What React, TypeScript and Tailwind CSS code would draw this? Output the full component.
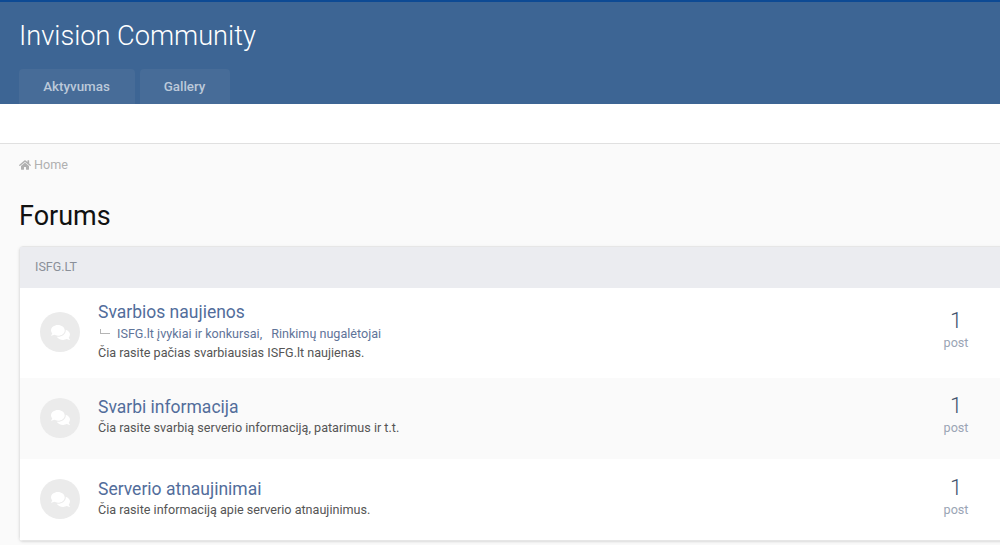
import React from 'react';
import { FaComments, FaHome } from 'react-icons/fa';

interface Forum {
  title: string;
  subs?: string[];
  desc: string;
  rowClass: string;
}

const forums: Forum[] = [
  {
    title: 'Svarbios naujienos',
    subs: ['ISFG.lt įvykiai ir konkursai,', 'Rinkimų nugalėtojai'],
    desc: 'Čia rasite pačias svarbiausias ISFG.lt naujienas.',
    rowClass: 'h-[90px] bg-white',
  },
  {
    title: 'Svarbi informacija',
    desc: 'Čia rasite svarbią serverio informaciją, patarimus ir t.t.',
    rowClass: 'h-[81px] bg-[#fafafa]',
  },
  {
    title: 'Serverio atnaujinimai',
    desc: 'Čia rasite informaciją apie serverio atnaujinimus.',
    rowClass: 'h-[81px] pt-[1px] bg-white',
  },
];

const ForumRow = ({ forum }: { forum: Forum }) => (
  <div className={`flex items-center pl-5 pr-[23px] ${forum.rowClass}`}>
    <div className="w-10 h-10 rounded-full bg-[#ebebeb] flex items-center justify-center shrink-0 mb-[2px]">
      <FaComments className="w-[19px] h-[19px] text-white" />
    </div>
    <div className="ml-[18px] flex-1 mb-[4px]">
      <h4 className="text-[17.5px] leading-[22px] text-[#526d9b]">{forum.title}</h4>
      {forum.subs && (
        <div className="flex items-center text-[12.6px] leading-[18px] text-[#5f7499] mt-[2px]">
          <span className="w-[10px] h-[5px] ml-[2px] mr-[7px] mb-[4px] border-l border-b border-[#b5b5b5]" />
          <span>{forum.subs[0]}</span>
          <span className="ml-[9px]">{forum.subs[1]}</span>
        </div>
      )}
      <p className="text-[12.6px] leading-[18px] text-[#555555] mt-[1px]">{forum.desc}</p>
    </div>
    <div className="w-[80px] text-center shrink-0 mb-[8px]">
      <div className="text-[22px] leading-[26px] font-light text-[#44546f]">1</div>
      <div className="text-[12.6px] leading-[17px] text-[#9aa5b5]">post</div>
    </div>
  </div>
);

const App = () => {
  return (
    <div className="w-[1000px] h-[545px] overflow-hidden bg-[#fafafa] font-['Roboto',sans-serif]">
      <header className="h-[104px] bg-[#3d6594] border-t-2 border-[#0d4a94] flex flex-col justify-between">
        <h1 className="pl-[19px] pt-[15px] text-[27.2px] leading-[38px] font-light text-white">Invision Community</h1>
        <nav className="flex gap-[5px] pl-[19px]">
          <a className="h-[35px] w-[116px] pt-[1px] pr-[1px] flex items-center justify-center rounded-t-sm bg-[#476c98] text-[13.4px] font-medium text-[#bcc9da]">
            Aktyvumas
          </a>
          <a className="h-[35px] w-[90px] pt-[1px] pr-[1px] flex items-center justify-center rounded-t-sm bg-[#476c98] text-[13.4px] font-medium text-[#bcc9da]">
            Gallery
          </a>
        </nav>
      </header>
      <div className="h-[40px] bg-white border-b border-[#e0e0e0]" />

      <main className="pl-[19px] w-[1020px]">
        <div className="flex items-center gap-[3px] h-[42px] text-[12.6px] text-[#b0b0b0]">
          <FaHome className="w-3 h-3" />
          <span>Home</span>
        </div>
        <h2 className="text-[27px] leading-[34px] text-[#111] mt-[13px] mb-[13px]">Forums</h2>

        <section className="rounded-sm border border-[#e6e6e6] shadow-sm">
          <div className="h-[41px] bg-[#ebecf0] flex items-center pl-[15px] text-[12.5px] text-[#8a8f98]">ISFG.LT</div>
          {forums.map((forum) => (
            <ForumRow key={forum.title} forum={forum} />
          ))}
        </section>
      </main>
    </div>
  );
};

export default App;
